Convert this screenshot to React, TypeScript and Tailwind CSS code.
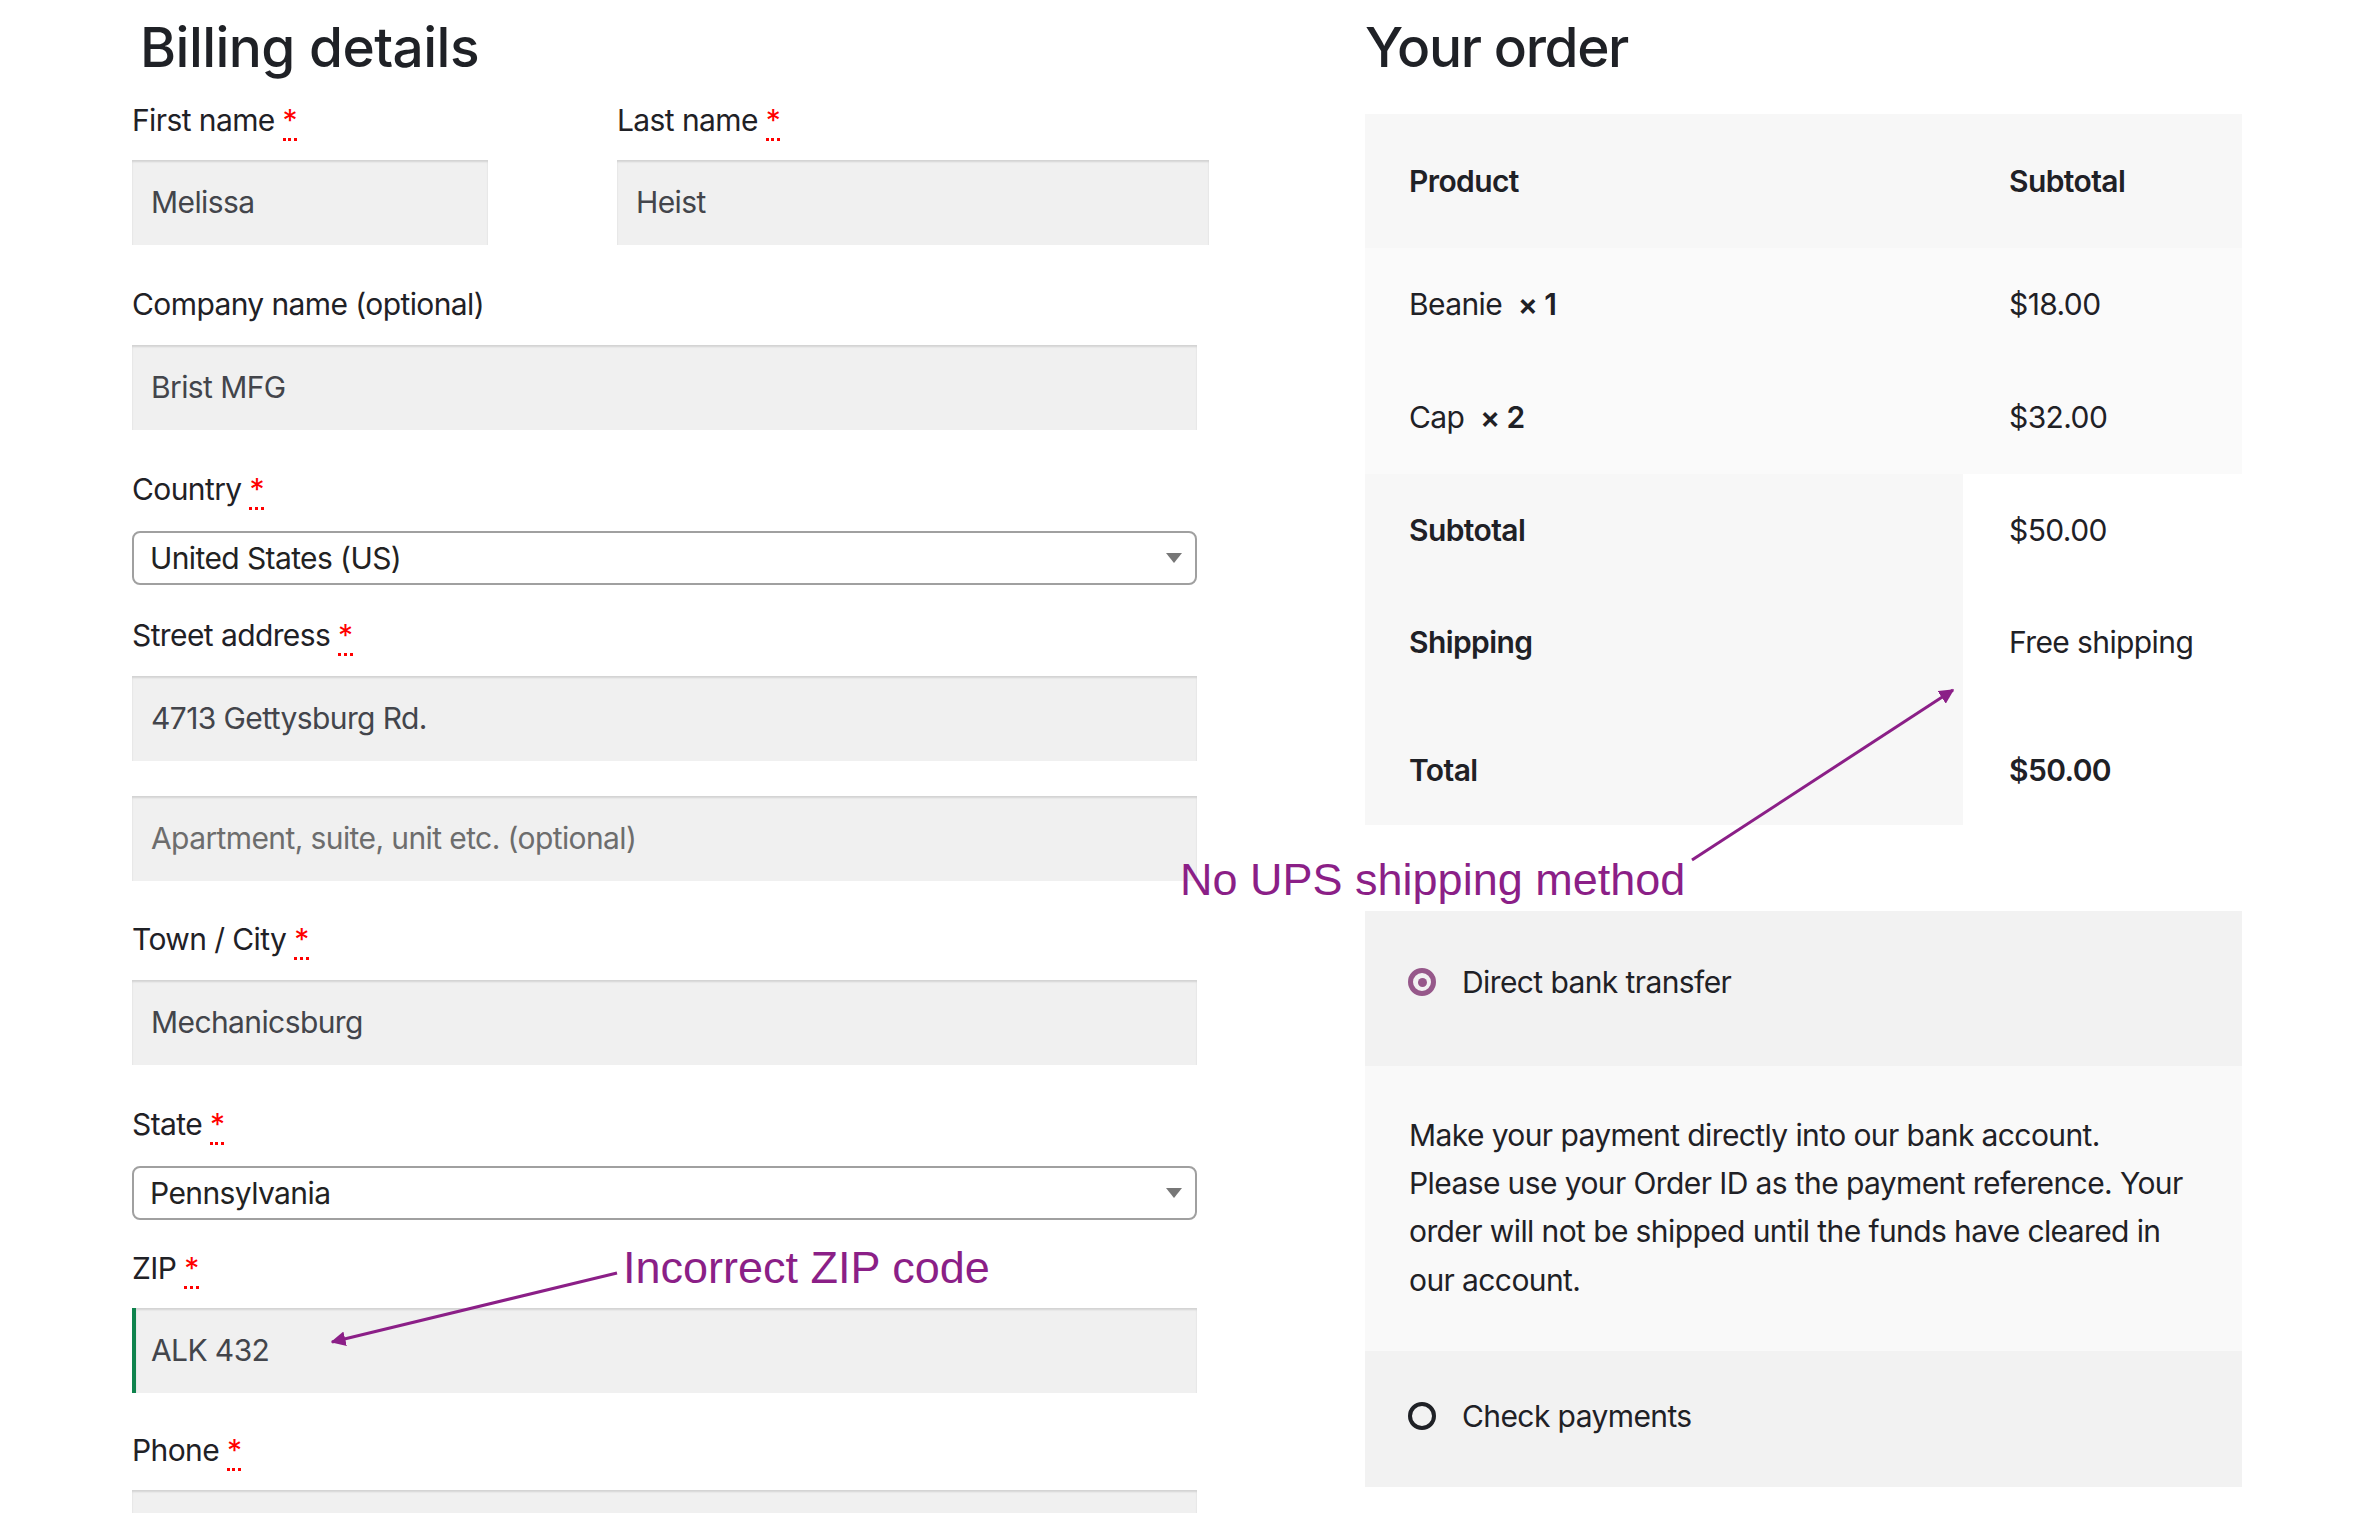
import React from 'react';

const Req = () => (
    <abbr
        title="required"
        className="text-[#ff0000] no-underline border-b-[3px] border-dotted border-[#ff0000] leading-none"
    >
        *
    </abbr>
);

const Label = ({ text, required = true, className = '' }: { text: string; required?: boolean; className?: string }) => (
    <div className={`h-[40px] leading-[40px] text-[#1f2126] tracking-[-0.02em] ${className}`}>
        {text}
        {required && (
            <>
                {' '}
                <Req />
            </>
        )}
    </div>
);

const TextInput = ({ value, placeholder, className = '', valid = false }: { value?: string; placeholder?: string; className?: string; valid?: boolean }) => (
    <div
        className={`h-[85px] bg-[#f0f0f0] shadow-[inset_0_2px_2px_rgba(0,0,0,0.12)] flex items-center tracking-[-0.02em] ${valid ? 'border-l-[4px] border-[#0f834d] pl-[15px]' : 'pl-[19px]'} ${className}`}
    >
        {value ? <span className="text-[#43454b]">{value}</span> : <span className="text-[#6d6d6d]">{placeholder}</span>}
    </div>
);

const SelectBox = ({ value, className = '' }: { value: string; className?: string }) => (
    <div className={`h-[54px] w-[1065px] border-2 border-[#a0a0a0] rounded-[8px] bg-white flex items-center justify-between pl-[16px] pr-[13px] text-[#222] tracking-[-0.02em] ${className}`}>
        <span>{value}</span>
        <svg width="16" height="10" viewBox="0 0 16 10">
            <path d="M0 0 L16 0 L8 10 Z" fill="#777" />
        </svg>
    </div>
);

const Radio = ({ checked }: { checked: boolean }) =>
    checked ? (
        <span className="w-[28px] h-[28px] rounded-full border-[5px] border-[#96588a] flex items-center justify-center">
            <span className="w-[9px] h-[9px] rounded-full bg-[#96588a]" />
        </span>
    ) : (
        <span className="w-[28px] h-[28px] rounded-full border-[4px] border-[#1f2126]" />
    );

export default function App() {
    return (
        <div className="relative w-[2356px] h-[1513px] overflow-hidden bg-white font-['Inter',sans-serif] text-[30px]">
            <div className="flex pl-[132px]">
                {/* billing */}
                <div className="w-[1077px]">
                    <h3 className="mt-[20px] ml-[8px] text-[55px] leading-none font-medium text-[#1f2126] tracking-[-0.01em]">Billing details</h3>

                    <div className="mt-[25px] flex">
                        <div className="w-[356px]">
                            <Label text="First name" />
                            <TextInput value="Melissa" className="mt-[20px]" />
                        </div>
                        <div className="ml-[129px] flex-1">
                            <Label text="Last name" />
                            <TextInput value="Heist" className="mt-[20px] w-[592px]" />
                        </div>
                    </div>

                    <Label text="Company name (optional)" required={false} className="mt-[39px]" />
                    <TextInput value="Brist MFG" className="mt-[21px] w-[1065px]" />

                    <Label text="Country" className="mt-[39px]" />
                    <SelectBox value="United States (US)" className="mt-[22px]" />

                    <Label text="Street address" className="mt-[30px]" />
                    <TextInput value="4713 Gettysburg Rd." className="mt-[21px] w-[1065px]" />
                    <TextInput placeholder="Apartment, suite, unit etc. (optional)" className="mt-[35px] w-[1065px]" />

                    <Label text="Town / City" className="mt-[38px]" />
                    <TextInput value="Mechanicsburg" className="mt-[21px] w-[1065px]" />

                    <Label text="State" className="mt-[39px]" />
                    <SelectBox value="Pennsylvania" className="mt-[22px]" />

                    <Label text="ZIP" className="mt-[28px]" />
                    <TextInput value="ALK 432" valid className="mt-[20px] w-[1065px]" />

                    <Label text="Phone" className="mt-[37px]" />
                    <TextInput className="mt-[20px] w-[1065px]" />
                </div>

                {/* order */}
                <div className="ml-[156px] w-[877px] text-[#1f2126] tracking-[-0.02em]">
                    <h3 className="mt-[20px] text-[55px] leading-none font-medium tracking-[-0.025em]">Your order</h3>

                    <div className="mt-[39px]">
                        <div className="h-[134px] bg-[#f7f7f7] flex items-center font-semibold">
                            <div className="w-[598px] pl-[44px]">Product</div>
                            <div className="pl-[46px]">Subtotal</div>
                        </div>
                        <div className="h-[113px] bg-[#fafafa] flex items-center">
                            <div className="w-[598px] pl-[44px]">
                                Beanie&nbsp; <strong className="font-semibold">× 1</strong>
                            </div>
                            <div className="pl-[46px]">$18.00</div>
                        </div>
                        <div className="h-[113px] bg-[#fafafa] flex items-center">
                            <div className="w-[598px] pl-[44px]">
                                Cap&nbsp; <strong className="font-semibold">× 2</strong>
                            </div>
                            <div className="pl-[46px]">$32.00</div>
                        </div>
                        <div className="flex">
                            <div className="w-[598px] bg-[#f7f7f7]">
                                <div className="h-[113px] flex items-center pl-[44px] font-semibold">Subtotal</div>
                                <div className="h-[111px] flex items-center pl-[44px] font-semibold">Shipping</div>
                                <div className="h-[127px] flex items-center pt-[18px] pl-[44px] font-semibold">Total</div>
                            </div>
                            <div className="flex-1 bg-white">
                                <div className="h-[113px] flex items-center pl-[46px]">$50.00</div>
                                <div className="h-[111px] flex items-center pl-[46px]">Free shipping</div>
                                <div className="h-[127px] flex items-center pt-[18px] pl-[46px] font-semibold">$50.00</div>
                            </div>
                        </div>
                    </div>

                    <div className="mt-[86px]">
                        <div className="h-[155px] bg-[#f2f2f2] flex items-center gap-[26px] pl-[43px] pb-[13px]">
                            <Radio checked />
                            <span>Direct bank transfer</span>
                        </div>
                        <div className="h-[285px] bg-[#f9f9f9] pt-[45px] pl-[44px] leading-[48.2px]">
                            Make your payment directly into our bank account.
                            <br />
                            Please use your Order ID as the payment reference. Your
                            <br />
                            order will not be shipped until the funds have cleared in
                            <br />
                            our account.
                        </div>
                        <div className="h-[136px] bg-[#f2f2f2] flex items-center gap-[26px] pl-[43px] pb-[6px]">
                            <Radio checked={false} />
                            <span>Check payments</span>
                        </div>
                    </div>
                </div>
            </div>

            {/* annotations */}
            <span className="absolute left-[623px] top-[1245px] text-[45px] leading-none text-[#8b1f87] font-['Liberation_Sans',Arial,sans-serif] whitespace-nowrap">
                Incorrect ZIP code
            </span>
            <span className="absolute left-[1180px] top-[857px] text-[45px] leading-none text-[#8b1f87] font-['Liberation_Sans',Arial,sans-serif] whitespace-nowrap">
                No UPS shipping method
            </span>
            <svg className="absolute inset-0 pointer-events-none" width="2356" height="1513" viewBox="0 0 2356 1513">
                <defs>
                    <marker id="ah" viewBox="0 0 10 10" refX="9" refY="5" markerWidth="5" markerHeight="5" orient="auto-start-reverse">
                        <path d="M0 0 L10 5 L0 10 Z" fill="#8b1f87" />
                    </marker>
                </defs>
                <line x1="617" y1="1273" x2="332" y2="1342" stroke="#8b1f87" strokeWidth="3" markerEnd="url(#ah)" />
                <line x1="1692" y1="860" x2="1953" y2="690" stroke="#8b1f87" strokeWidth="3" markerEnd="url(#ah)" />
            </svg>
        </div>
    );
}
